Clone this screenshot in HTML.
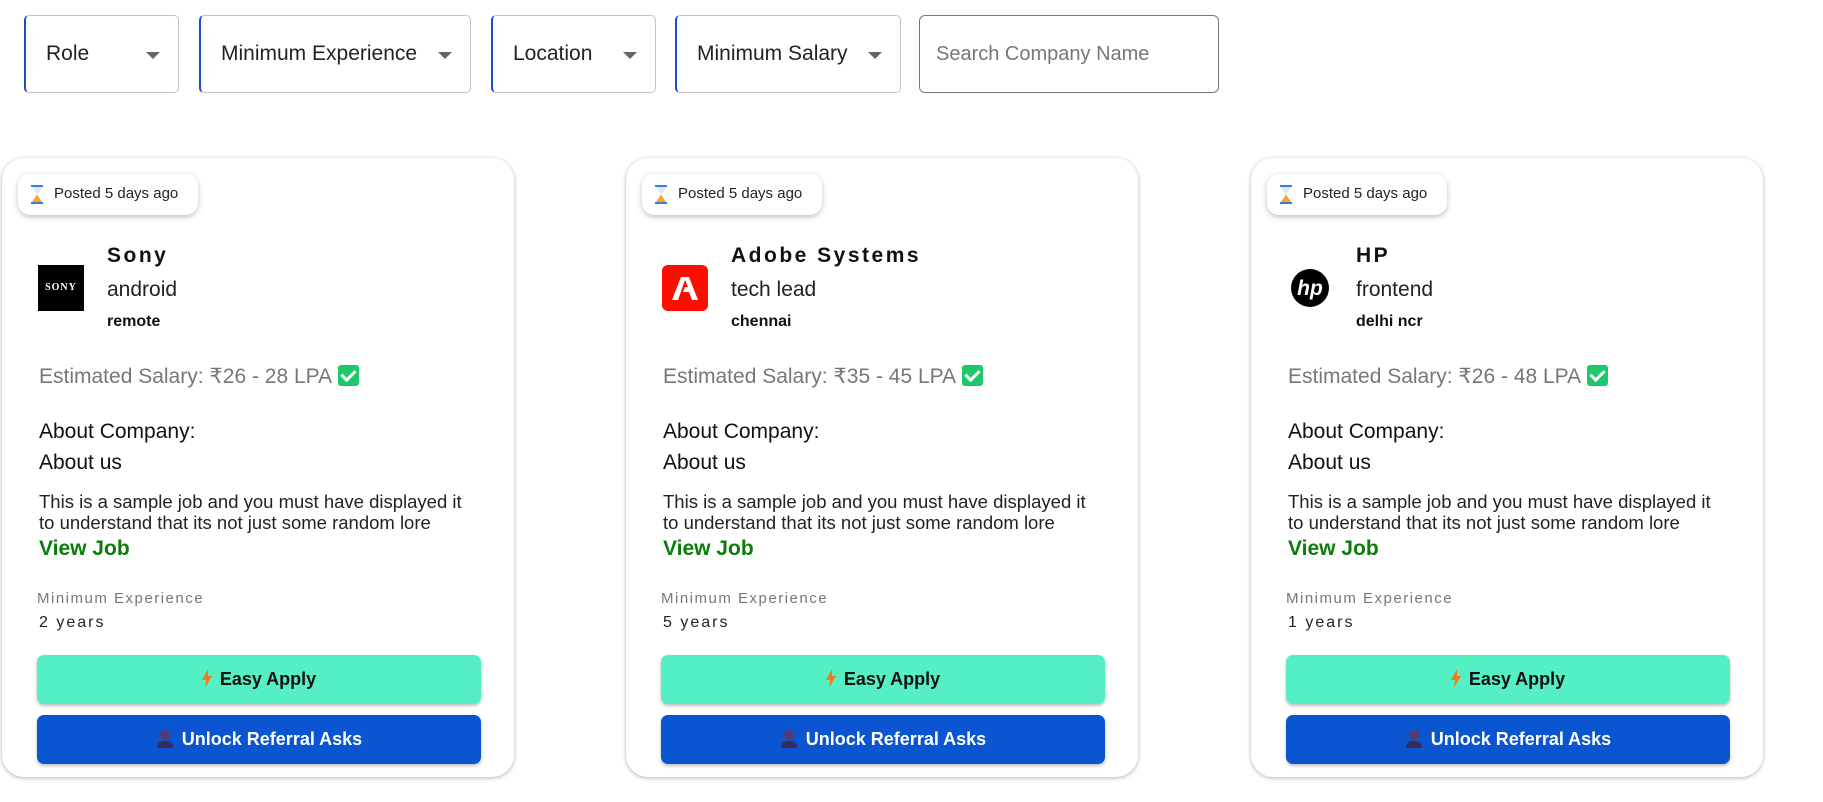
<!DOCTYPE html>
<html><head><meta charset="utf-8"><style>
*{box-sizing:border-box;margin:0;padding:0}
body{width:1823px;height:802px;overflow:hidden;background:#fff;font-family:"Liberation Sans",sans-serif;color:#111;position:relative}
.f{position:absolute;top:15px;height:78px;border:1px solid #c4c4c4;border-left:2px solid #1a4fc4;border-radius:5px;font-size:21px;color:#222}
.f span{position:absolute;left:20px;top:26px}
.f i{position:absolute;right:18px;top:36px;border-left:7px solid transparent;border-right:7px solid transparent;border-top:7px solid #666}
.s{position:absolute;left:919px;top:15px;width:300px;height:78px;border:1px solid #777;border-radius:6px;font-size:20px;color:#777}
.s span{position:absolute;left:16px;top:27px}
.card{position:absolute;top:158px;width:512px;height:619px;border-radius:22px;background:#fff;box-shadow:0 1px 4px rgba(0,0,0,.3);}
.badge{position:absolute;left:16px;top:16px;width:180px;height:41px;border-radius:12px;box-shadow:0 2px 6px rgba(0,0,0,.25);font-size:15px;color:#222}
.badge span{position:absolute;left:36px;top:11px}
.hg{position:absolute;left:13px;top:11px;width:12px;height:19px}
.logo{position:absolute;left:36px;top:107px;width:46px;height:46px}
.t{position:absolute;left:105px;top:86px;font-size:21px;font-weight:bold;letter-spacing:2.5px}
.r{position:absolute;left:105px;top:120px;font-size:21px;color:#222}
.l{position:absolute;left:105px;top:155px;font-size:16px;font-weight:bold}
.sal{position:absolute;left:37px;top:206px;font-size:21px;color:#777;white-space:nowrap}
.chk{display:inline-block;width:21px;height:21px;background:#1ec86a;border-radius:3px;vertical-align:-3px;margin-left:6px;position:relative}
.chk:after{content:"";position:absolute;left:6px;top:2px;width:6px;height:11px;border:solid #fff;border-width:0 3px 3px 0;transform:rotate(45deg)}
.ac{position:absolute;left:37px;top:258px;font-size:21px;font-weight:500;line-height:31px}
.p{position:absolute;left:37px;top:333px;font-size:18.5px;line-height:21px;color:#222;width:432px}
.vj{position:absolute;left:37px;top:379px;font-size:21px;font-weight:bold;color:#0a7d0a}
.me{position:absolute;left:35px;top:432px;font-size:15px;color:#777;letter-spacing:1.5px}
.yr{position:absolute;left:37px;top:456px;font-size:16px;letter-spacing:2px;color:#222}
.b{position:absolute;left:35px;width:444px;height:49px;border-radius:7px;font-size:18px;font-weight:bold;text-align:center;line-height:49px;box-shadow:0 2px 3px rgba(0,0,0,.25)}
.b svg{vertical-align:-3px;margin-right:8px}
.ea{top:497px;background:#55efc4;color:#111}
.ur{top:557px;background:#0b56d0;color:#fff}
</style></head><body>
<div class="f" style="left:24px;width:155px"><span>Role</span><i></i></div>
<div class="f" style="left:199px;width:272px"><span>Minimum Experience</span><i></i></div>
<div class="f" style="left:491px;width:165px"><span>Location</span><i></i></div>
<div class="f" style="left:675px;width:226px"><span>Minimum Salary</span><i></i></div>
<div class="s"><span>Search Company Name</span></div>

<div class="card" style="left:2px">
<div class="badge"><svg class="hg" viewBox="0 0 12 19"><rect x="0" y="0" width="12" height="2" fill="#3b7dd8"/><rect x="0" y="17" width="12" height="2" fill="#3b7dd8"/><path d="M1 2h10L6 9.5 11 17H1L6 9.5z" fill="#f5a623"/><path d="M1 2h10L6 9.5z" fill="#dbe8f6"/></svg><span>Posted 5 days ago</span></div>
<div class="logo" style="background:#000;color:#fff;font-family:'Liberation Serif',serif;font-size:10px;font-weight:bold;letter-spacing:1px;text-align:center;line-height:46px">SONY</div>
<div class="t">Sony</div><div class="r">android</div><div class="l">remote</div>
<div class="sal">Estimated Salary: ₹26 - 28 LPA<span class="chk"></span></div>
<div class="ac">About Company:<br>About us</div>
<div class="p">This is a sample job and you must have displayed it<br>to understand that its not just some random lore</div>
<div class="vj">View Job</div>
<div class="me">Minimum Experience</div><div class="yr">2 years</div>
<div class="b ea"><svg width="10" height="19" viewBox="0 0 10 19"><path d="M6 0L0 11h4l-1 8 7-12H6z" fill="#f27b22"/></svg>Easy Apply</div>
<div class="b ur"><svg width="18" height="19" viewBox="0 0 18 19"><circle cx="9" cy="6" r="5" fill="#5a3a6a"/><path d="M1 19c0-5 3-7 8-7s8 2 8 7z" fill="#3a2a5a"/></svg>Unlock Referral Asks</div>
</div>

<div class="card" style="left:626px">
<div class="badge"><svg class="hg" viewBox="0 0 12 19"><rect x="0" y="0" width="12" height="2" fill="#3b7dd8"/><rect x="0" y="17" width="12" height="2" fill="#3b7dd8"/><path d="M1 2h10L6 9.5 11 17H1L6 9.5z" fill="#f5a623"/><path d="M1 2h10L6 9.5z" fill="#dbe8f6"/></svg><span>Posted 5 days ago</span></div>
<svg class="logo" viewBox="0 0 46 46"><rect width="46" height="46" rx="6" fill="#fa0f00"/><path d="M19 12h8l9 23h-6l-3-8h-6l2-5h3l-3-7-7 20h-6z" fill="#fff"/></svg>
<div class="t">Adobe Systems</div><div class="r">tech lead</div><div class="l">chennai</div>
<div class="sal">Estimated Salary: ₹35 - 45 LPA<span class="chk"></span></div>
<div class="ac">About Company:<br>About us</div>
<div class="p">This is a sample job and you must have displayed it<br>to understand that its not just some random lore</div>
<div class="vj">View Job</div>
<div class="me">Minimum Experience</div><div class="yr">5 years</div>
<div class="b ea"><svg width="10" height="19" viewBox="0 0 10 19"><path d="M6 0L0 11h4l-1 8 7-12H6z" fill="#f27b22"/></svg>Easy Apply</div>
<div class="b ur"><svg width="18" height="19" viewBox="0 0 18 19"><circle cx="9" cy="6" r="5" fill="#5a3a6a"/><path d="M1 19c0-5 3-7 8-7s8 2 8 7z" fill="#3a2a5a"/></svg>Unlock Referral Asks</div>
</div>

<div class="card" style="left:1251px">
<div class="badge"><svg class="hg" viewBox="0 0 12 19"><rect x="0" y="0" width="12" height="2" fill="#3b7dd8"/><rect x="0" y="17" width="12" height="2" fill="#3b7dd8"/><path d="M1 2h10L6 9.5 11 17H1L6 9.5z" fill="#f5a623"/><path d="M1 2h10L6 9.5z" fill="#dbe8f6"/></svg><span>Posted 5 days ago</span></div>
<svg class="logo" viewBox="0 0 46 46"><circle cx="23" cy="23" r="19" fill="#000"/><text x="23" y="30" text-anchor="middle" font-family="Liberation Sans" font-style="italic" font-weight="bold" font-size="21" fill="#fff">hp</text></svg>
<div class="t">HP</div><div class="r">frontend</div><div class="l">delhi ncr</div>
<div class="sal">Estimated Salary: ₹26 - 48 LPA<span class="chk"></span></div>
<div class="ac">About Company:<br>About us</div>
<div class="p">This is a sample job and you must have displayed it<br>to understand that its not just some random lore</div>
<div class="vj">View Job</div>
<div class="me">Minimum Experience</div><div class="yr">1 years</div>
<div class="b ea"><svg width="10" height="19" viewBox="0 0 10 19"><path d="M6 0L0 11h4l-1 8 7-12H6z" fill="#f27b22"/></svg>Easy Apply</div>
<div class="b ur"><svg width="18" height="19" viewBox="0 0 18 19"><circle cx="9" cy="6" r="5" fill="#5a3a6a"/><path d="M1 19c0-5 3-7 8-7s8 2 8 7z" fill="#3a2a5a"/></svg>Unlock Referral Asks</div>
</div>
</body></html>
